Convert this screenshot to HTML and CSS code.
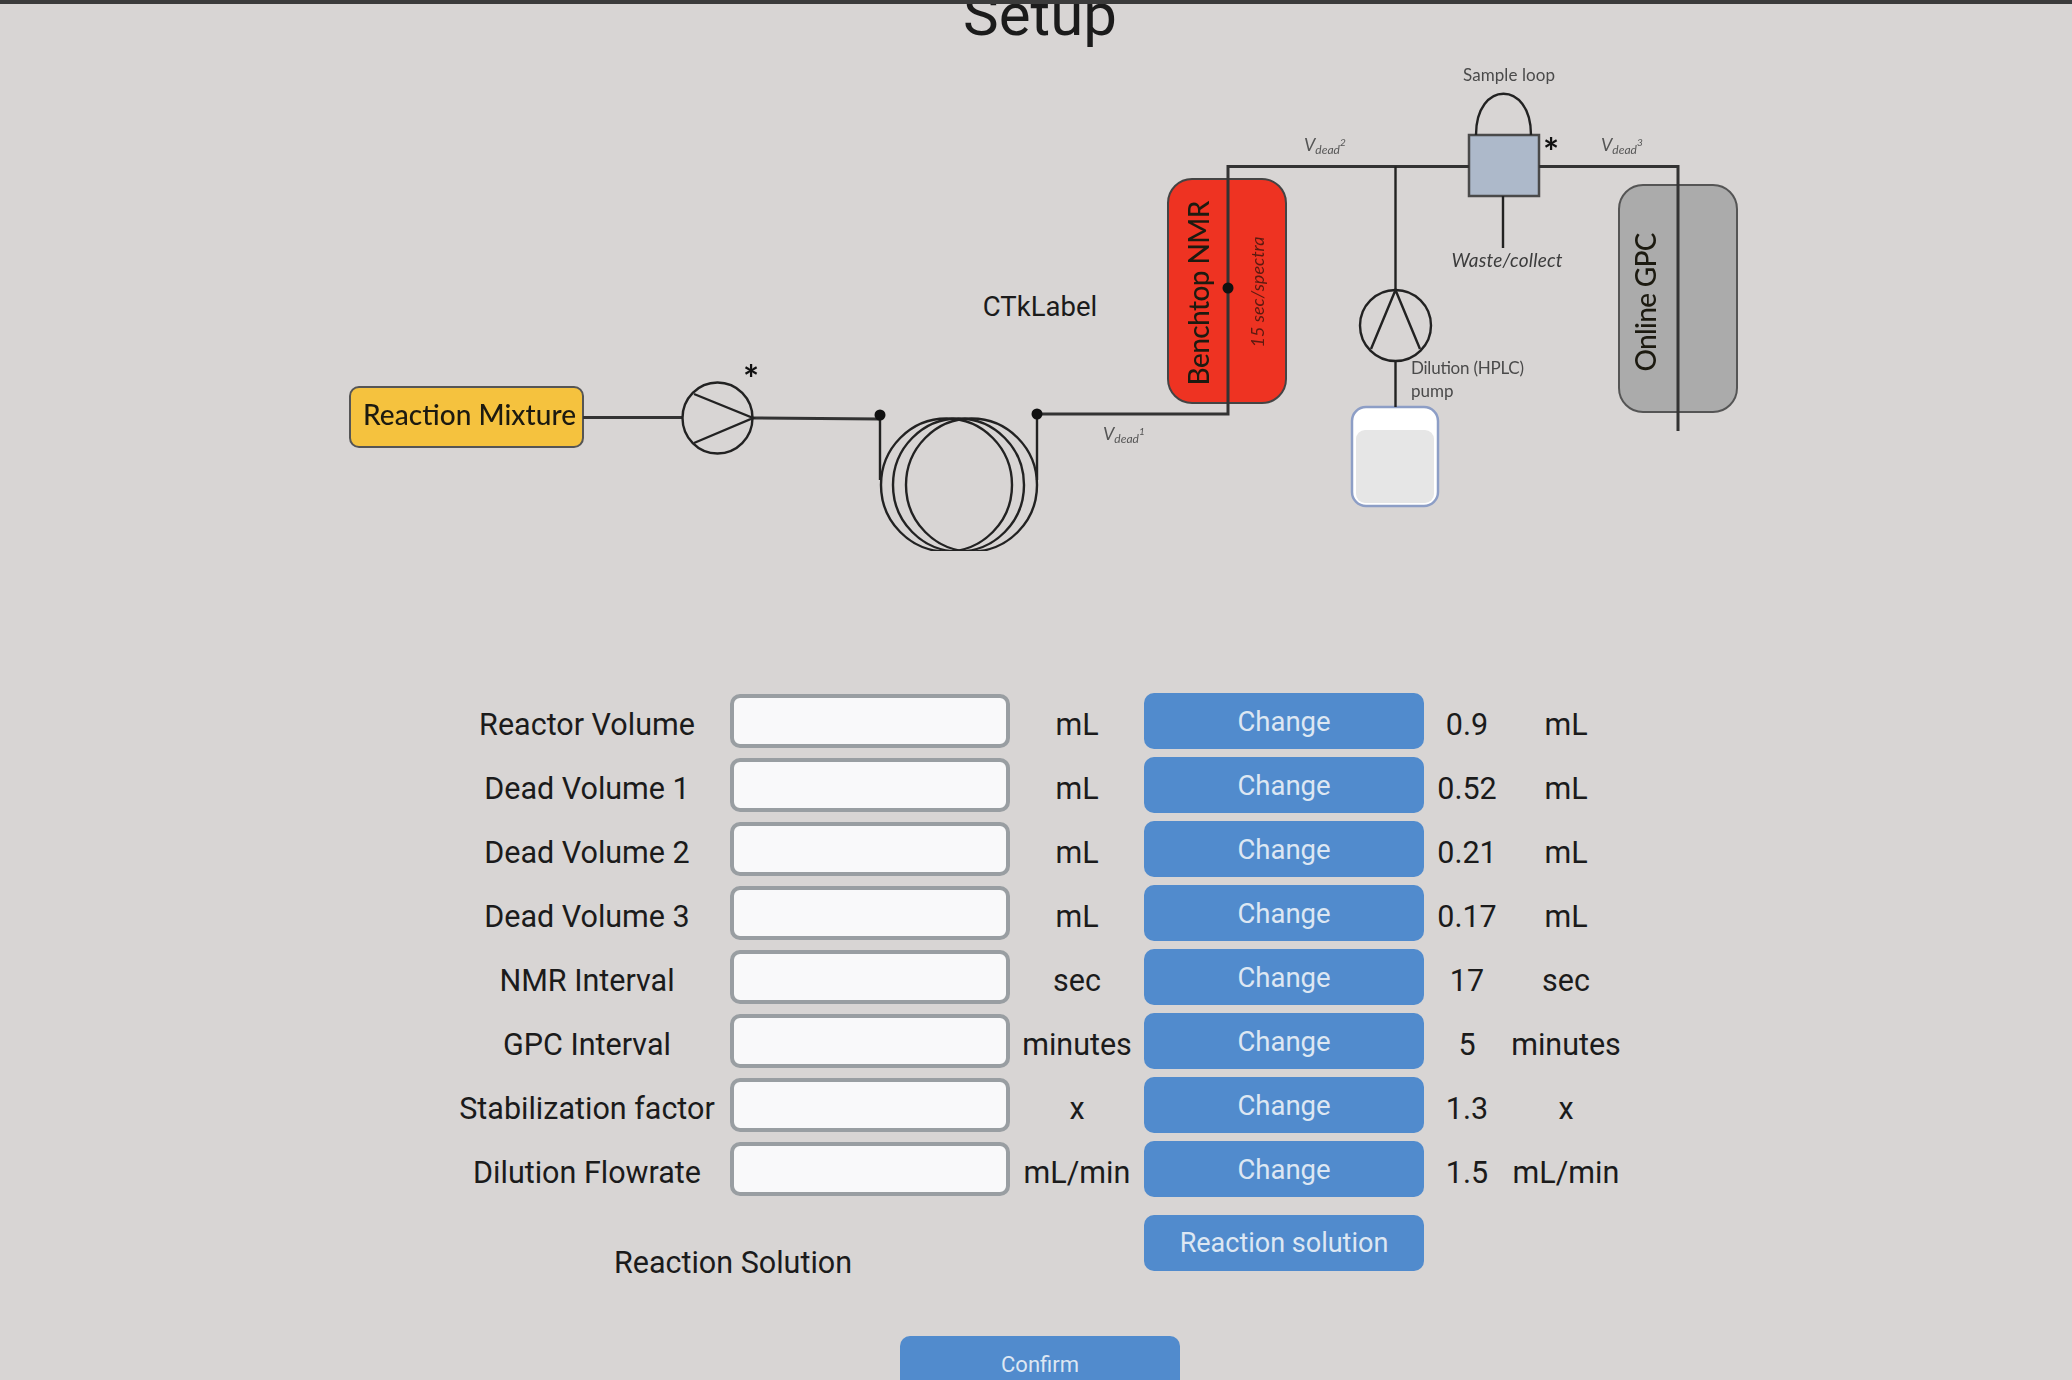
FILE: index.html
```html
<!DOCTYPE html>
<html lang="en">
<head>
  <meta charset="UTF-8" />
  <title>Setup</title>
  <link rel="stylesheet" href="styles.css">
</head>
<body>
  <div class="topbar"></div>
  <main class="page">
    <div class="title-box">
      <h1 class="title">Setup</h1>
    </div>

    <div class="diagram">
      <svg class="flow" width="1420" height="500" viewBox="330 60 1420 500">
        <!-- boxes -->
        <rect class="box-yellow" x="350" y="387" width="233" height="60" rx="9" />
        <rect class="box-red" x="1168" y="179" width="118" height="224" rx="24" />
        <rect class="box-gray" x="1619" y="185" width="118" height="227" rx="24" />
        <rect class="bottle" x="1352" y="407" width="86" height="99" rx="14" />
        <rect class="bottle-in" x="1356" y="430" width="78" height="73" rx="9" />
        <rect class="valve" x="1469" y="135" width="70" height="61" />

        <!-- tubing -->
        <path class="tube-thick" d="M583 417.5 H682 M753 418 L880 419" />
        <path class="tube-thick" d="M1037 414 H1228 V166.5 H1469 M1539 166.5 H1678 V431" />
        <path class="tube" d="M1395.5 166.5 V290 M1395.5 361 V407 M1503 196 V248" />
        <path class="tube" d="M880 415 V480 M1037 415 V480" />

        <!-- reaction pump -->
        <ellipse class="tube" cx="717.5" cy="418" rx="35" ry="35.5" />
        <path class="tube" d="M694 394 L753 418 L694 443" />

        <!-- coil, the picture is cut off at the bottom -->
        <g clip-path="url(#coilClip)">
          <ellipse class="tube" cx="946.5" cy="485" rx="65.5" ry="66.5" />
          <ellipse class="tube" cx="958.5" cy="485" rx="65.5" ry="66.5" />
          <ellipse class="tube" cx="971.5" cy="485" rx="65.5" ry="66.5" />
        </g>
        <clipPath id="coilClip"><rect x="870" y="410" width="180" height="141" /></clipPath>

        <!-- dilution pump -->
        <ellipse class="tube" cx="1395.5" cy="325.5" rx="35.5" ry="35.5" />
        <path class="tube" d="M1371 349 L1395.5 290 L1420 349" />

        <!-- sample loop -->
        <path class="tube" d="M1476 135 C1476 80 1531 80 1531 135" />

        <circle class="dot" cx="880" cy="415" r="5.5" />
        <circle class="dot" cx="1037" cy="414" r="5.5" />
        <circle class="dot" cx="1228" cy="288" r="5.5" />

        <!-- labels -->
        <text class="t-main" x="469.5" y="425" text-anchor="middle" textLength="213">Reaction Mixture</text>
        <text class="t-main" transform="translate(1209 293) rotate(-90)" text-anchor="middle" textLength="185">Benchtop NMR</text>
        <text class="t-main" transform="translate(1656 302) rotate(-90)" text-anchor="middle" textLength="139">Online GPC</text>
        <text class="t-spectra" transform="translate(1264 292) rotate(-90)" text-anchor="middle" textLength="111">15 sec/spectra</text>
        <text class="t-small" x="1509" y="81" text-anchor="middle" textLength="92">Sample loop</text>
        <text class="t-waste" x="1507" y="267" text-anchor="middle" textLength="111">Waste/collect</text>
        <text class="t-small" x="1411" y="374" textLength="113">Dilution (HPLC)</text>
        <text class="t-small" x="1411" y="397">pump</text>
        <text class="t-star" x="751" y="393" text-anchor="middle">*</text>
        <text class="t-star" x="1551" y="166" text-anchor="middle">*</text>
        <text class="t-vdead" x="1304" y="151">V<tspan class="t-sub" dy="3">dead</tspan><tspan class="t-sup" dy="-8">2</tspan></text>
        <text class="t-vdead" x="1601" y="151">V<tspan class="t-sub" dy="3">dead</tspan><tspan class="t-sup" dy="-8">3</tspan></text>
        <text class="t-vdead" x="1103" y="440">V<tspan class="t-sub" dy="3">dead</tspan><tspan class="t-sup" dy="-8">1</tspan></text>
      </svg>
      <div class="ctk-label">CTkLabel</div>
    </div>

    <form class="settings">
      <div class="cell">Reactor Volume</div>
      <input class="field" type="text" />
      <div class="cell">mL</div>
      <button class="btn" type="button">Change</button>
      <div class="cell">0.9</div>
      <div class="cell">mL</div>

      <div class="cell">Dead Volume 1</div>
      <input class="field" type="text" />
      <div class="cell">mL</div>
      <button class="btn" type="button">Change</button>
      <div class="cell">0.52</div>
      <div class="cell">mL</div>

      <div class="cell">Dead Volume 2</div>
      <input class="field" type="text" />
      <div class="cell">mL</div>
      <button class="btn" type="button">Change</button>
      <div class="cell">0.21</div>
      <div class="cell">mL</div>

      <div class="cell">Dead Volume 3</div>
      <input class="field" type="text" />
      <div class="cell">mL</div>
      <button class="btn" type="button">Change</button>
      <div class="cell">0.17</div>
      <div class="cell">mL</div>

      <div class="cell">NMR Interval</div>
      <input class="field" type="text" />
      <div class="cell">sec</div>
      <button class="btn" type="button">Change</button>
      <div class="cell">17</div>
      <div class="cell">sec</div>

      <div class="cell">GPC Interval</div>
      <input class="field" type="text" />
      <div class="cell">minutes</div>
      <button class="btn" type="button">Change</button>
      <div class="cell">5</div>
      <div class="cell">minutes</div>

      <div class="cell">Stabilization factor</div>
      <input class="field" type="text" />
      <div class="cell">x</div>
      <button class="btn" type="button">Change</button>
      <div class="cell">1.3</div>
      <div class="cell">x</div>

      <div class="cell">Dilution Flowrate</div>
      <input class="field" type="text" />
      <div class="cell">mL/min</div>
      <button class="btn" type="button">Change</button>
      <div class="cell">1.5</div>
      <div class="cell">mL/min</div>

      <div class="cell solution-label">Reaction Solution</div>
      <button class="btn solution-btn" type="button">Reaction solution</button>
    </form>

    <button class="btn confirm" type="button">Confirm</button>
  </main>
</body>
</html>
```

FILE: styles.css
```css
html, body {
  height: 100%;
  overflow: hidden;
}
body {
  margin: 0;
  background-color: #d8d5d4;
  color: #1b1b1b;
  font-family: Roboto, "Liberation Sans", sans-serif;
}
.topbar {
  height: 4px;
  background-color: #3b3b3b;
}
.page {
  padding-left: 8px;
}
.title-box {
  height: 46px;
  overflow: hidden;
}
.title {
  margin: -18px 0 0;
  font-size: 60px;
  line-height: 58px;
  font-weight: 400;
  text-align: center;
}

.diagram {
  position: relative;
  width: 1420px;
  height: 500px;
  margin: 10px auto 0;
}
.flow {
  display: block;
  filter: blur(0.7px);
}
.ctk-label {
  position: absolute;
  left: 0;
  right: 0;
  top: 230px;
  text-align: center;
  font-size: 27.5px;
  line-height: 34px;
}

.box-yellow { fill: #f5c23e; stroke: #555; stroke-width: 2; }
.box-red { fill: #ee3322; stroke: #444; stroke-width: 2; }
.box-gray { fill: #ababab; stroke: #555; stroke-width: 2; }
.bottle { fill: #fff; stroke: #8d9ec6; stroke-width: 2.5; }
.bottle-in { fill: #e6e6e6; }
.valve { fill: #adb9ca; stroke: #4a4a4a; stroke-width: 2.5; }
.tube { fill: none; stroke: #222; stroke-width: 2.4; }
.tube-thick { fill: none; stroke: #333; stroke-width: 3; }
.dot { fill: #111; }

.flow text { font-family: Lato, "Open Sans", sans-serif; }
.t-main { font-size: 28px; font-weight: 500; fill: #1c1a10; }
.t-spectra { font-size: 18px; font-style: italic; fill: #5c1a10; }
.t-small { font-size: 17px; fill: #4a4a4a; }
.t-waste { font-size: 19px; font-style: italic; fill: #3c3c3c; }
.t-star { font-size: 38px; font-weight: 700; fill: #111; }
.t-vdead { font-size: 18px; font-style: italic; fill: #555; }
.t-sub { font-size: 12px; }
.t-sup { font-size: 10px; }

.settings {
  display: grid;
  grid-template-columns: 270px 280px 118px 280px 70px 112px;
  grid-auto-rows: 56px;
  gap: 8px;
  margin: 133px 0 0 444px;
  width: max-content;
}
.cell {
  display: flex;
  align-items: center;
  justify-content: center;
  padding-top: 7px;
  box-sizing: border-box;
  font-size: 30.5px;
  white-space: nowrap;
}
.field {
  box-sizing: border-box;
  height: 54px;
  margin-top: 1px;
  width: 280px;
  border: 4px solid #999ea2;
  border-radius: 10px;
  background-color: #f9f9fa;
}
.btn {
  width: 280px;
  height: 56px;
  padding: 0;
  border: none;
  border-radius: 10px;
  background-color: #518bcd;
  color: #dde7f3;
  font-family: Roboto, "Liberation Sans", sans-serif;
  font-size: 27.5px;
}
.solution-label {
  grid-column: 1 / span 2;
  align-self: start;
  height: 36px;
  margin-top: 39px;
  padding: 0 0 0 4px;
}
.solution-btn {
  grid-column: 4;
  margin-top: 10px;
  font-size: 27px;
}
.confirm {
  display: block;
  margin: 75px auto 0;
  font-size: 22px;
}
```
